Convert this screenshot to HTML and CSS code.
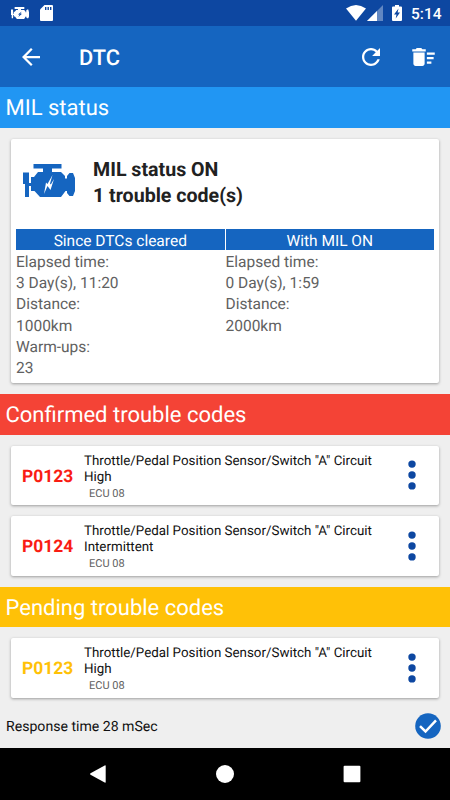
FILE: index.html
```html
<!DOCTYPE html>
<html lang="en">
<head>
    <meta charset="UTF-8">
    <meta name="viewport" content="width=device-width, initial-scale=1.0">
    <title>DTC</title>
    <link rel="stylesheet" href="styles.css">
</head>
<body>
    <!-- Shared icons -->
    <svg class="sprite" aria-hidden="true">
        <symbol id="engine" viewBox="0 0 52 35">
            <path d="M10.5 1H38.500V5.500H29V9H38L42 13V15.500H44V13L46.500 10H50L52 15V28L50 33H46.500L44 30V28H42.500L38 34H17L11.500 28H8V23H6V34H2V21H0V9.500H6V20H8V14H11L15 9H20V5.500H10.500Z"/>
        </symbol>
        <symbol id="bolt" viewBox="0 0 12 20">
            <path d="M9.500 0L4.500 9L3 7.500L1 19L4.500 11L7.500 15L11 4L7.800 9.500L7 8.500Z"/>
        </symbol>
        <symbol id="more" viewBox="0 0 8 30">
            <circle cx="4" cy="4.100" r="3.700"/>
            <circle cx="4" cy="15" r="3.700"/>
            <circle cx="4" cy="25.900" r="3.700"/>
        </symbol>
    </svg>

    <div class="status-bar">
        <svg class="status-engine" viewBox="0 0 52 35" preserveAspectRatio="none">
            <path d="M10.5 0H38.500V5.500H29V9H38L42 13V15.500H44V10L46.500 7H50L52 15V28L50 33H46.500L44 30V28H42.500L38 35H17L11.500 28H8V23H6V33H2V23H0V7H6V20H8V14H11L15 9H20V5.500H10.500Z" fill="#fff"/>
            <path d="M31 13L20 22H25L21 29L32 20H27Z" fill="#0d47a1"/>
        </svg>
        <svg class="status-sd" viewBox="0 0 13 16">
            <path d="M4.500 0H12Q13 0 13 1V15Q13 16 12 16H1Q0 16 0 15V4.500Z" fill="#fff"/>
            <path d="M5 2H6.400V5H5ZM7.500 2H8.900V5H7.500ZM10 2H11.400V5H10Z" fill="#0d47a1"/>
        </svg>
        <svg class="status-wifi" viewBox="0 0 20 16">
            <path d="M0 3.600Q10-3.600 20 3.600L10 15.700Z" fill="#fff"/>
        </svg>
        <svg class="status-signal" viewBox="0 0 16 16">
            <path d="M16 0V16H0Z" fill="#fff" opacity=".35"/>
            <path d="M10 6V16H0Z" fill="#fff"/>
        </svg>
        <svg class="status-battery" viewBox="0 0 10 16">
            <path d="M3 0H7V1.500H9Q10 1.500 10 2.500V15Q10 16 9 16H1Q0 16 0 15V2.500Q0 1.500 1 1.500H3Z" fill="#fff"/>
            <path d="M6.500 3.500L2 9.500H4.500L3.700 13.500L8 7.600H5.600Z" fill="#0d47a1"/>
        </svg>
        <span class="clock">5:14</span>
    </div>

    <header class="toolbar">
        <svg class="icon-back" viewBox="4 4 16 16">
            <path d="M20 11H7.830l5.590-5.590L12 4l-8 8 8 8 1.410-1.410L7.830 13H20v-2z"/>
        </svg>
        <h1>DTC</h1>
        <svg class="icon-refresh" viewBox="4 4 16 16">
            <path d="M17.650 6.350C16.200 4.900 14.210 4 12 4c-4.420 0-7.990 3.580-7.990 8s3.570 8 7.990 8c3.730 0 6.840-2.550 7.730-6h-2.080c-.82 2.330-3.040 4-5.650 4-3.310 0-6-2.690-6-6s2.690-6 6-6c1.660 0 3.140.69 4.220 1.780L13 11h7V4l-2.350 2.350z"/>
        </svg>
        <svg class="icon-sweep" viewBox="2 4 20 16">
            <path d="M15 16h4v2h-4zm0-8h7v2h-7zm0 4h6v2h-6zM3 18c0 1.100.9 2 2 2h6c1.100 0 2-.9 2-2V8H3v10zM14 5h-3l-1-1H6L5 5H2v2h12z"/>
        </svg>
    </header>

    <main class="content">
        <h2 class="section section-mil">MIL status</h2>
        <div class="card mil-card">
            <div class="mil-head">
                <svg class="mil-icon" viewBox="0 0 52 35">
                    <use href="#engine" width="52" height="35" fill="#1565c0"/>
                    <use href="#bolt" x="20" y="12" width="12" height="20" fill="#fff"/>
                </svg>
                <p>MIL status ON<br>1 trouble code(s)</p>
            </div>
            <div class="mil-columns">
                <div>
                    <h3>Since DTCs cleared</h3>
                    <p>Elapsed time:<br>3 Day(s), 11:20<br>Distance:<br>1000km<br>Warm-ups:<br>23</p>
                </div>
                <div>
                    <h3>With MIL ON</h3>
                    <p>Elapsed time:<br>0 Day(s), 1:59<br>Distance:<br>2000km</p>
                </div>
            </div>
        </div>

        <h2 class="section section-confirmed">Confirmed trouble codes</h2>
        <div class="card code-card">
            <span class="code confirmed">P0123</span>
            <div class="details">
                <p>Throttle/Pedal Position Sensor/Switch "A" Circuit High</p>
                <small>ECU 08</small>
            </div>
            <svg class="more"><use href="#more"/></svg>
        </div>
        <div class="card code-card">
            <span class="code confirmed">P0124</span>
            <div class="details">
                <p>Throttle/Pedal Position Sensor/Switch "A" Circuit Intermittent</p>
                <small>ECU 08</small>
            </div>
            <svg class="more"><use href="#more"/></svg>
        </div>

        <h2 class="section section-pending">Pending trouble codes</h2>
        <div class="card code-card">
            <span class="code pending">P0123</span>
            <div class="details">
                <p>Throttle/Pedal Position Sensor/Switch "A" Circuit High</p>
                <small>ECU 08</small>
            </div>
            <svg class="more"><use href="#more"/></svg>
        </div>
    </main>

    <footer class="response">
        <span>Response time 28 mSec</span>
        <svg class="icon-check" viewBox="0 0 26 26">
            <circle cx="13" cy="13" r="12.800" fill="#1565c0"/>
            <path d="M5 13.200L10.500 18.500L21 7.300" fill="none" stroke="#fff" stroke-width="2.500"/>
        </svg>
    </footer>

    <nav class="nav-bar">
        <svg viewBox="0 0 18 18"><path d="M16.700 1V17Q16.700 18 15.700 17.500L1.500 9.800Q.5 9 1.500 8.300L15.700.5Q16.700 0 16.700 1Z"/></svg>
        <svg viewBox="0 0 18 18"><circle cx="9" cy="9" r="9"/></svg>
        <svg viewBox="0 0 18 18"><rect x=".6" y=".7" width="16.800" height="16.600" rx="1"/></svg>
    </nav>
</body>
</html>
```

FILE: styles.css
```css
* {
    box-sizing: border-box;
}
body {
    margin: 0;
    width: 450px;
    height: 800px;
    display: flex;
    flex-direction: column;
    overflow: hidden;
    background: #efefef;
    font-family: Roboto, sans-serif;
    text-rendering: geometricPrecision;
}
h1, h2, h3, p {
    margin: 0;
    font-weight: 400;
}
svg {
    display: block;
    flex: none;
}
.sprite {
    position: absolute;
    width: 0;
    height: 0;
}

/* System status bar */
.status-bar {
    display: flex;
    align-items: center;
    height: 26px;
    padding: 0 9px 0 11px;
    background: #0d47a1;
    color: #fff;
}
.status-engine {
    width: 18px;
    height: 12px;
}
.status-sd {
    width: 13px;
    height: 16px;
    margin-left: 11px;
}
.status-wifi {
    width: 20px;
    height: 16px;
    margin-left: auto;
}
.status-signal {
    width: 16px;
    height: 16px;
    margin-left: 1px;
}
.status-battery {
    width: 10px;
    height: 16px;
    margin-left: 9px;
}
.clock {
    width: 30px;
    margin-left: 9px;
    padding-top: 2px;
    font-size: 15.500px;
    font-weight: 500;
    line-height: 26px;
    white-space: nowrap;
}

/* App toolbar */
.toolbar {
    display: flex;
    align-items: center;
    height: 61px;
    padding: 0 15px 0 22px;
    background: #1565c0;
    color: #fff;
    fill: #fff;
}
.toolbar h1 {
    margin-left: 39px;
    padding-top: 3px;
    font-size: 21.800px;
    font-weight: 500;
}
.icon-back {
    width: 18px;
    height: 18px;
}
.icon-refresh {
    width: 18px;
    height: 18px;
    margin-left: auto;
}
.icon-sweep {
    width: 23px;
    height: 18px;
    margin-left: 32px;
}

/* Content */
.content {
    flex: none;
}
.section {
    height: 40.500px;
    padding-left: 5.500px;
    color: #fff;
    font-size: 22px;
    line-height: 44px;
}
.section-mil {
    background: #2196f3;
}
.section-confirmed {
    background: #f44336;
}
.section-pending {
    background: #ffc107;
    line-height: 43px;
}
.card {
    margin: 11px;
    background: #fff;
    border-radius: 2px;
    box-shadow: 0 1px 3px rgba(0, 0, 0, .35);
}
.mil-card {
    height: 244.500px;
    padding: 17.500px 5px 0;
}
.mil-head {
    display: flex;
    height: 73px;
    padding-left: 7px;
}
.mil-icon {
    width: 52px;
    height: 35px;
    margin-top: 7px;
}
.mil-head p {
    margin-left: 18px;
    padding-top: 1px;
    color: #212121;
    font-size: 19.600px;
    font-weight: 700;
    line-height: 26px;
}
.mil-columns {
    display: grid;
    grid-template-columns: 1fr 1fr;
    gap: 1px;
}
.mil-columns h3 {
    height: 21px;
    background: #1565c0;
    color: #fff;
    font-size: 15.500px;
    line-height: 24px;
    text-align: center;
}
.mil-columns p {
    color: #616161;
    font-size: 15.500px;
    line-height: 21.200px;
    padding-top: 2px;
}
.code-card {
    display: flex;
    align-items: center;
    height: 59.500px;
    padding: 0 23px 0 11px;
}
.code {
    width: 62px;
    padding-top: 3px;
    font-size: 17.400px;
    font-weight: 700;
}
.confirmed {
    color: #f91c13;
}
.pending {
    color: #ffc107;
}
.details {
    width: 300px;
    padding-top: 5px;
    color: #111;
    font-size: 13.350px;
    line-height: 16px;
}
.details small {
    display: block;
    padding-left: 5px;
    color: #616161;
    font-size: 11px;
}
.more {
    width: 8px;
    height: 30px;
    margin-left: auto;
    fill: #0d47a1;
}
.response {
    display: flex;
    flex: 1;
    align-items: center;
    justify-content: space-between;
    padding: 0 9px 5px 6px;
    color: #111;
    font-size: 14.100px;
}
.response span {
    padding-top: 2px;
}
.icon-check {
    width: 26px;
    height: 26px;
}

/* System navigation */
.nav-bar {
    display: flex;
    align-items: center;
    justify-content: center;
    gap: 109px;
    height: 52px;
    background: #000;
    fill: #fff;
}
.nav-bar svg {
    width: 18px;
    height: 18px;
}
```
